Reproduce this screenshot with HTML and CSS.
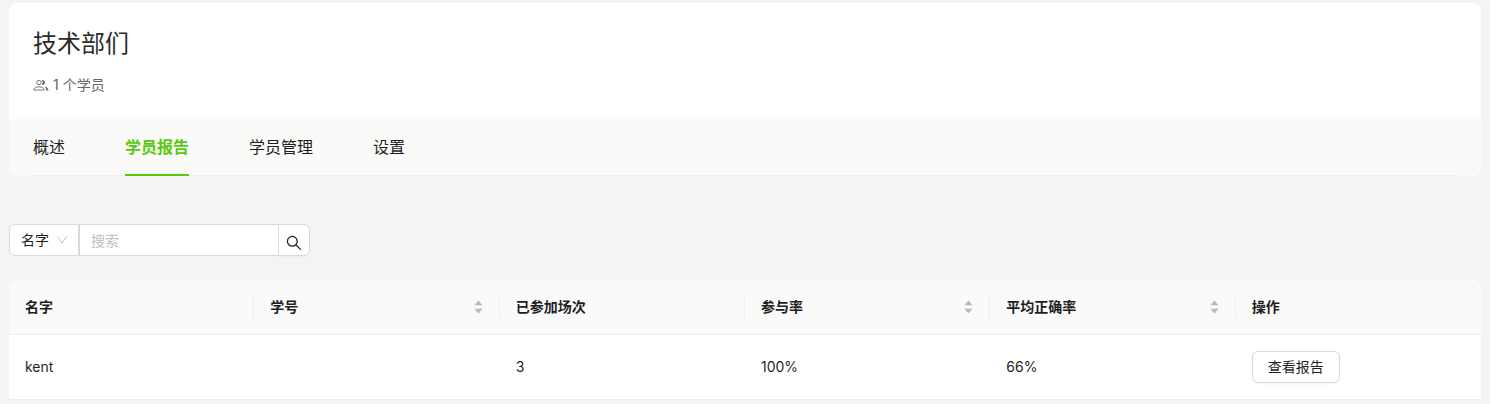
FILE: index.html
```html
<!DOCTYPE html>
<html lang="zh-CN">
<head>
    <meta charset="UTF-8">
    <meta name="viewport" content="width=device-width, initial-scale=1.0">
    <title>学员报告 - 技术部们</title>
    <link rel="stylesheet" href="styles.css">
</head>
<body>
    <main class="page">
        <!-- 部门信息 -->
        <header class="dept-card">
            <div class="dept-info">
                <h1 class="dept-name">技术部们</h1>
                <p class="dept-members">
                    <svg class="icon-team" viewBox="0 0 16 12" aria-hidden="true">
                        <circle cx="6" cy="3.500" r="2.200"/>
                        <path d="M.8 11c0-2 2.200-3.200 5.200-3.200s5.200 1.200 5.200 3.200z"/>
                        <path class="solid" d="M8.800 1c1.800-.3 3.200.8 3.200 2.500S10.600 6.300 8.800 6c1.200-1.500 1.200-3.500 0-5zM11.300 7.500c2.500.5 4.200 1.700 4.200 4h-2.200c0-1.700-.7-3-2-4z"/>
                    </svg>
                    <span>1 个学员</span>
                </p>
            </div>
            <nav class="tabs">
                <div class="tabs-list">
                    <a class="tab" href="#overview">概述</a>
                    <a class="tab tab-active" href="#report" aria-current="page">学员报告</a>
                    <a class="tab" href="#members">学员管理</a>
                    <a class="tab" href="#settings">设置</a>
                </div>
            </nav>
        </header>

        <!-- 搜索 -->
        <form class="search" role="search">
            <div class="search-field">
                <select class="search-select" aria-label="搜索字段">
                    <option>名字</option>
                    <option>学号</option>
                </select>
                <svg class="icon-down" viewBox="0 0 12 8" aria-hidden="true"><path d="M1.500 .5l4.500 6.500 4.500-6.500"/></svg>
            </div>
            <input class="search-input" type="text" placeholder="搜索" aria-label="搜索">
            <button class="search-button" type="submit" aria-label="搜索">
                <svg class="icon-search" viewBox="0 0 16 16" aria-hidden="true">
                    <circle cx="6.300" cy="6.300" r="4.900"/>
                    <path d="M9.800 9.800l5 4.800"/>
                </svg>
            </button>
        </form>

        <!-- 学员报告表格 -->
        <table class="report-table">
            <thead>
                <tr>
                    <th>名字</th>
                    <th>
                        <button class="sort-button" type="button">学号
                            <svg class="icon-sort" viewBox="0 0 10 14" aria-hidden="true"><path d="M4.500 .5l4 4.700h-8zM4.500 13.500l-4-4.700h8z"/></svg>
                        </button>
                    </th>
                    <th>已参加场次</th>
                    <th>
                        <button class="sort-button" type="button">参与率
                            <svg class="icon-sort" viewBox="0 0 10 14" aria-hidden="true"><path d="M4.500 .5l4 4.700h-8zM4.500 13.500l-4-4.700h8z"/></svg>
                        </button>
                    </th>
                    <th>
                        <button class="sort-button" type="button">平均正确率
                            <svg class="icon-sort" viewBox="0 0 10 14" aria-hidden="true"><path d="M4.500 .5l4 4.700h-8zM4.500 13.500l-4-4.700h8z"/></svg>
                        </button>
                    </th>
                    <th>操作</th>
                </tr>
            </thead>
            <tbody>
                <tr>
                    <td>kent</td>
                    <td></td>
                    <td>3</td>
                    <td>100%</td>
                    <td>66%</td>
                    <td><button class="button" type="button">查看报告</button></td>
                </tr>
            </tbody>
        </table>
    </main>
</body>
</html>
```

FILE: styles.css
```css
:root {
    --primary-color: #58c90e;
    --text-color: #1f1f1f;
    --text-secondary: #666666;
    --placeholder-color: #bfbfbf;
    --bg-color: #f4f4f2;
    --card-bg: #ffffff;
    --tabs-bg: #fafaf8;
    --border-color: #d9d9d9;
    --line-color: #eeeeee;
}

* {
    margin: 0;
    padding: 0;
    box-sizing: border-box;
}

body {
    font-family: Inter, "Noto Sans CJK SC", sans-serif;
    font-size: 14px;
    line-height: 22px;
    color: var(--text-color);
    background: var(--bg-color);
}

button,
input,
select {
    font: inherit;
    color: inherit;
}

.page {
    padding: 3px 9px 4px;
}

/* 部门信息 */
.dept-card {
    margin-bottom: 48px;
    border-radius: 8px;
    background: var(--card-bg);
    overflow: hidden;
}

.dept-info {
    padding: 24px;
}

.dept-name {
    margin-bottom: 14px;
    font-size: 24px;
    font-weight: 400;
    line-height: 34px;
    color: #2b2b2b;
}

.dept-members {
    display: flex;
    align-items: center;
    gap: 4px;
    line-height: 20px;
    color: var(--text-secondary);
}

.icon-team {
    width: 16px;
    height: 12px;
    fill: none;
    stroke: currentColor;
    stroke-width: 0.9;
}

.icon-team .solid {
    fill: currentColor;
    stroke: none;
}

/* 标签页 */
.tabs {
    padding: 0 24px;
    background: var(--tabs-bg);
}

.tabs-list {
    display: flex;
    gap: 60px;
    box-shadow: inset 0 -1px var(--line-color);
}

.tab {
    padding: 16px 0 15px;
    border-bottom: 2px solid transparent;
    font-size: 16px;
    line-height: 24px;
    color: inherit;
    text-decoration: none;
}

.tab-active {
    border-color: var(--primary-color);
    font-weight: 700;
    color: var(--primary-color);
}

/* 搜索 */
.search {
    display: flex;
    margin-bottom: 24px;
}

.search-field {
    position: relative;
}

.search-select,
.search-input,
.search-button {
    height: 32px;
    border: 1px solid var(--border-color);
    background: var(--card-bg);
}

.search-select {
    appearance: none;
    width: 70px;
    padding: 0 11px;
    border-radius: 6px 0 0 6px;
}

.icon-down {
    position: absolute;
    top: 12px;
    right: 11px;
    width: 12px;
    height: 8px;
    fill: none;
    stroke: var(--placeholder-color);
    pointer-events: none;
}

.search-input {
    width: 200px;
    padding: 0 11px;
}

.search-input::placeholder {
    color: var(--placeholder-color);
}

.search-button {
    display: flex;
    align-items: center;
    justify-content: center;
    width: 32px;
    margin-left: -1px;
    padding-top: 6px;
    border-radius: 0 6px 6px 0;
    box-shadow: 0 2px 0 rgba(0, 0, 0, 0.02);
    cursor: pointer;
}

.icon-search {
    width: 16px;
    height: 16px;
    fill: none;
    stroke: currentColor;
    stroke-width: 1.3;
}

/* 表格 */
.report-table {
    width: 100%;
    border-spacing: 0;
    border-radius: 8px 8px 0 0;
    table-layout: fixed;
    background: var(--card-bg);
    overflow: hidden;
}

.report-table th,
.report-table td {
    padding: 16px;
    border-bottom: 1px solid var(--line-color);
    text-align: left;
}

.report-table th {
    position: relative;
    background: #fafafa;
    font-weight: 600;
}

.report-table th:not(:last-child)::after {
    content: "";
    position: absolute;
    top: 16px;
    right: 0;
    width: 1px;
    height: 23px;
    background: var(--line-color);
}

.sort-button {
    display: flex;
    align-items: center;
    justify-content: space-between;
    width: 100%;
    border: none;
    background: none;
    cursor: pointer;
}

.icon-sort {
    width: 10px;
    height: 14px;
    fill: #b8b8b8;
}

.button {
    display: block;
    height: 32px;
    padding: 0 15px;
    border: 1px solid var(--border-color);
    border-radius: 6px;
    background: var(--card-bg);
    box-shadow: 0 2px 0 rgba(0, 0, 0, 0.02);
    cursor: pointer;
}
```
